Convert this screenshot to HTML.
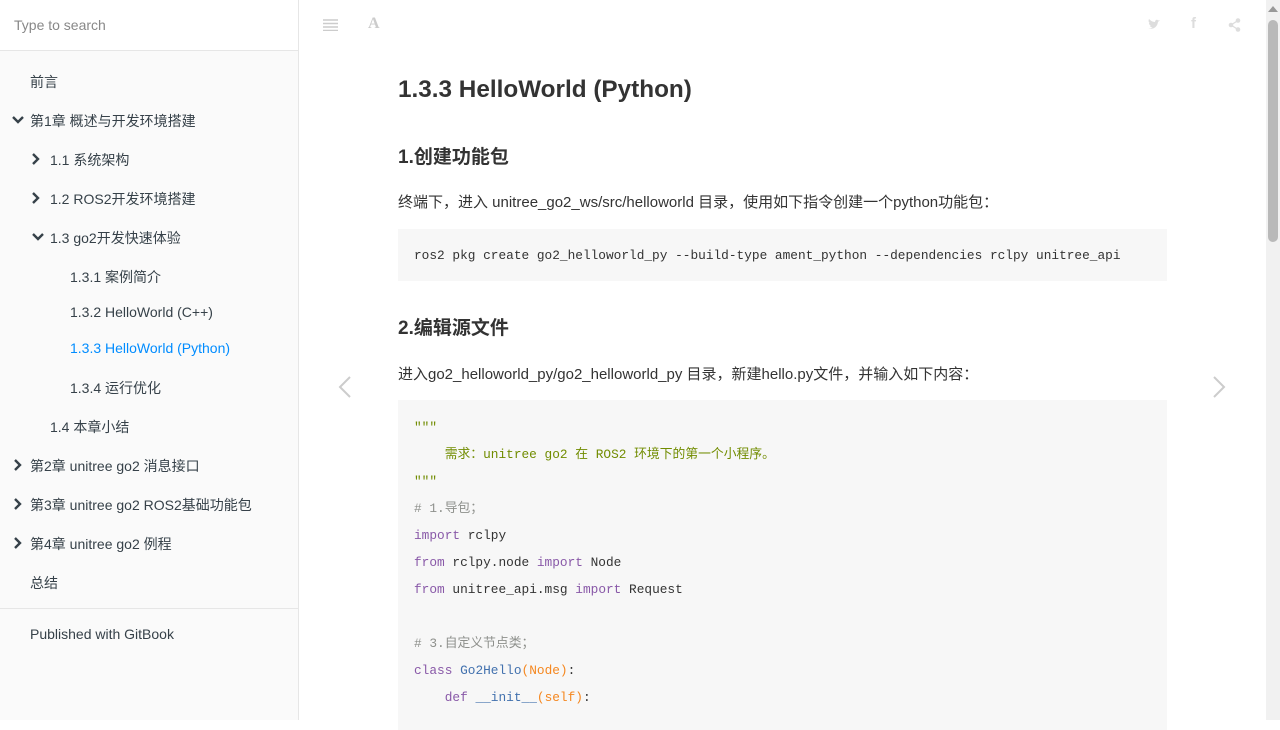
<!DOCTYPE html>
<html><head><meta charset="utf-8"><style>
*{margin:0;padding:0;box-sizing:border-box}
body{width:1280px;height:720px;overflow:hidden;background:#fff;font-family:"Liberation Sans","Noto Sans CJK SC",sans-serif;color:#333;position:relative}
#side{position:absolute;left:0;top:0;width:299px;height:720px;background:#fafafa;border-right:1px solid #e6e6e6}
#search{height:51px;background:#fff;border-bottom:1px solid #e6e6e6;padding:17px 14px;font-size:14px;color:#888}
.it{position:absolute;font-size:14px;color:#364149;white-space:nowrap}
.it svg{position:absolute;left:-18px;top:3px}
.act{color:#008cff}
#main{position:absolute;left:300px;top:0;width:966px;height:720px}
h1{position:absolute;left:98px;top:76px;font-size:24.3px;font-weight:bold;color:#333}
h2{position:absolute;left:98px;font-size:19px;font-weight:bold;color:#333}
p{position:absolute;left:98px;font-size:15px;color:#333}
pre{position:absolute;left:98px;width:769px;background:#f7f7f7;font-family:"Liberation Mono","Noto Sans CJK SC",monospace;font-size:12.8px;color:#333;padding:0 16px}
.c{line-height:27px;height:27px;white-space:pre}
.k{color:#8959a8}.s{color:#718c00}.cm{color:#8e908c}.o{color:#f5871f}
</style></head><body>
<div id="side">
<div id="search">Type to search</div>
<div class="it" style="left:30px;top:72px">前言</div>
<div class="it" style="left:30px;top:111px"><svg width="12" height="12" viewBox="0 0 12 12"><path d="M1 3l5 5 5-5" stroke="#364149" stroke-width="2.4" fill="none"/></svg>第1章 概述与开发环境搭建</div>
<div class="it" style="left:50px;top:150px"><svg width="12" height="12" viewBox="0 0 12 12" style="left:-20px"><path d="M3 1l5 5-5 5" stroke="#364149" stroke-width="2.4" fill="none"/></svg>1.1 系统架构</div>
<div class="it" style="left:50px;top:189px"><svg width="12" height="12" viewBox="0 0 12 12" style="left:-20px"><path d="M3 1l5 5-5 5" stroke="#364149" stroke-width="2.4" fill="none"/></svg>1.2 ROS2开发环境搭建</div>
<div class="it" style="left:50px;top:228px"><svg width="12" height="12" viewBox="0 0 12 12"><path d="M1 3l5 5 5-5" stroke="#364149" stroke-width="2.4" fill="none"/></svg>1.3 go2开发快速体验</div>
<div class="it" style="left:70px;top:267px">1.3.1 案例简介</div>
<div class="it" style="left:70px;top:304px">1.3.2 HelloWorld (C++)</div>
<div class="it act" style="left:70px;top:340px">1.3.3 HelloWorld (Python)</div>
<div class="it" style="left:70px;top:378px">1.3.4 运行优化</div>
<div class="it" style="left:50px;top:417px">1.4 本章小结</div>
<div class="it" style="left:30px;top:456px"><svg width="12" height="12" viewBox="0 0 12 12"><path d="M3 1l5 5-5 5" stroke="#364149" stroke-width="2.4" fill="none"/></svg>第2章 unitree go2 消息接口</div>
<div class="it" style="left:30px;top:495px"><svg width="12" height="12" viewBox="0 0 12 12"><path d="M3 1l5 5-5 5" stroke="#364149" stroke-width="2.4" fill="none"/></svg>第3章 unitree go2 ROS2基础功能包</div>
<div class="it" style="left:30px;top:534px"><svg width="12" height="12" viewBox="0 0 12 12"><path d="M3 1l5 5-5 5" stroke="#364149" stroke-width="2.4" fill="none"/></svg>第4章 unitree go2 例程</div>
<div class="it" style="left:30px;top:573px">总结</div>
<div style="position:absolute;left:0;top:608px;width:298px;border-top:1px solid #e6e6e6"></div>
<div class="it" style="left:30px;top:626px">Published with GitBook</div>
</div>
<div id="main">
<svg style="position:absolute;left:23px;top:19px" width="15" height="12"><path d="M0 1h15M0 4.5h15M0 8h15M0 11.5h15" stroke="#ccc" stroke-width="1.5"/></svg>
<div style="position:absolute;left:68px;top:15px;font-family:'Liberation Serif',serif;font-weight:bold;font-size:16px;color:#ccc">A</div>
<svg style="position:absolute;left:848px;top:19px" width="13" height="11" viewBox="0 0 13 11"><path d="M0 9c4 2 9 0 10-6l2-2-2 .5C9 0 7 1 7 3 4 3 2 1 1 0 0 2 1 4 2 4L1 4c0 1.5 1 2.5 2 3L2 7c.5 1 1.5 1.5 2.5 1.5C3 9.5 1.5 9.5 0 9z" fill="#ddd"/></svg>
<div style="position:absolute;left:891px;top:15px;font-size:15px;color:#ddd;font-weight:bold">f</div>
<svg style="position:absolute;left:928px;top:18px" width="13" height="14"><circle cx="10" cy="2.5" r="2.3" fill="#ddd"/><circle cx="3" cy="7" r="2.3" fill="#ddd"/><circle cx="10" cy="11.5" r="2.3" fill="#ddd"/><path d="M10 2.5L3 7l7 4.5" stroke="#ddd" stroke-width="1.3" fill="none"/></svg>
<h1>1.3.3 HelloWorld (Python)</h1>
<h2 style="top:142px">1.创建功能包</h2>
<p style="top:191px">终端下，进入 unitree_go2_ws/src/helloworld 目录，使用如下指令创建一个python功能包：</p>
<pre style="top:229px;height:52px;padding-top:13px"><div class="c">ros2 pkg create go2_helloworld_py --build-type ament_python --dependencies rclpy unitree_api</div></pre>
<h2 style="top:313px">2.编辑源文件</h2>
<p style="top:363px">进入go2_helloworld_py/go2_helloworld_py 目录，新建hello.py文件，并输入如下内容：</p>
<pre style="top:400px;height:330px;padding-top:14px"><div class="c s">"""</div><div class="c s">    需求：unitree go2 在 ROS2 环境下的第一个小程序。</div><div class="c s">"""</div><div class="c cm"># 1.导包；</div><div class="c"><span class="k">import</span> rclpy</div><div class="c"><span class="k">from</span> rclpy.node <span class="k">import</span> Node</div><div class="c"><span class="k">from</span> unitree_api.msg <span class="k">import</span> Request</div><div class="c"> </div><div class="c cm"># 3.自定义节点类；</div><div class="c"><span class="k">class</span> <span style="color:#4271ae">Go2Hello</span><span class="o">(Node)</span>:</div><div class="c">    <span class="k">def</span> <span style="color:#4271ae">__init__</span><span class="o">(self)</span>:</div></pre>
<svg style="position:absolute;left:38px;top:376px" width="14" height="22"><path d="M12 1L2 11l10 10" stroke="#ccc" stroke-width="2" fill="none"/></svg>
<svg style="position:absolute;left:912px;top:376px" width="14" height="22"><path d="M2 1l10 10L2 21" stroke="#ccc" stroke-width="2" fill="none"/></svg>
</div>
<div style="position:absolute;left:1266px;top:0;width:14px;height:720px;background:#f1f1f1"></div>
<div style="position:absolute;left:1268px;top:20px;width:10px;height:222px;background:#b9b9b9;border-radius:5px"></div>
<svg style="position:absolute;left:1268px;top:6px" width="10" height="6"><path d="M0 6L5 0l5 6z" fill="#999"/></svg>
</body></html>
